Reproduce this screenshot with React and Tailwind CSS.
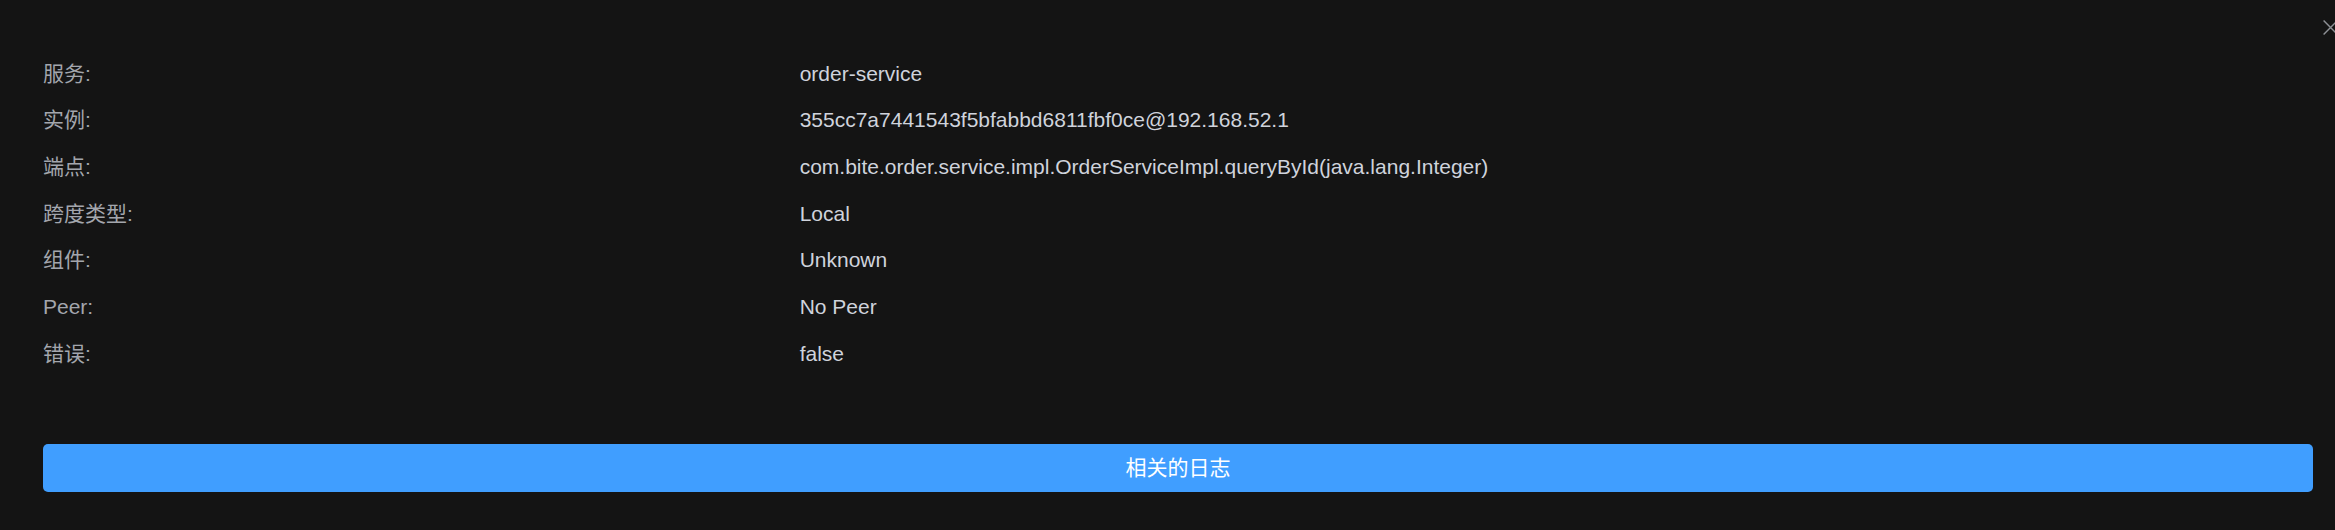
const rows = [
  { label: '服务:', value: 'order-service' },
  { label: '实例:', value: '355cc7a7441543f5bfabbd6811fbf0ce@192.168.52.1' },
  { label: '端点:', value: 'com.bite.order.service.impl.OrderServiceImpl.queryById(java.lang.Integer)' },
  { label: '跨度类型:', value: 'Local' },
  { label: '组件:', value: 'Unknown' },
  { label: 'Peer:', value: 'No Peer' },
  { label: '错误:', value: 'false' },
];

export default function App() {
  return (
    <div
      className="relative h-[530px] w-full overflow-hidden bg-[#141414]"
      style={{ fontFamily: '"Liberation Sans", Arial, "Noto Sans CJK SC", sans-serif' }}
    >
      {/* 关闭 */}
      <button className="absolute left-[2322px] top-[19px] h-[17px] w-[17px] text-[#8d9095]">
        <svg viewBox="0 0 16 16" width="17" height="17" fill="none" stroke="currentColor" strokeWidth="1.4">
          <path d="M1.5 1.5 L14.5 14.5 M14.5 1.5 L1.5 14.5" />
        </svg>
      </button>

      <div className="ml-[43px] w-[2270px] pt-[50px]">
        <div className="flex flex-col">
          {rows.map((row) => (
            <div key={row.label} className="grid h-[46.67px] grid-cols-3 items-center text-[21px] leading-none">
              <div className="text-[#a3a6ad]">{row.label}</div>
              <div className="col-span-2 text-[#cfd3dc]">{row.value}</div>
            </div>
          ))}
        </div>

        <button className="mt-[67px] flex h-[48px] w-full items-center justify-center rounded-[5px] bg-[#409eff] text-[21px] text-white">
          相关的日志
        </button>
      </div>
    </div>
  );
}
